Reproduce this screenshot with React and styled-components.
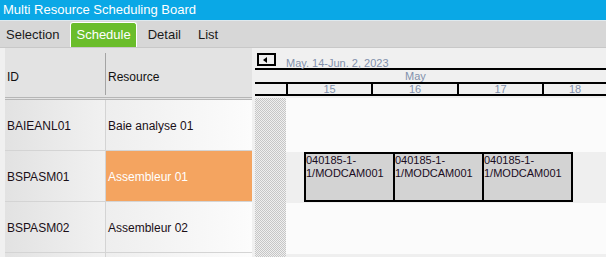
import styled, { createGlobalStyle } from 'styled-components';

const GlobalStyle = createGlobalStyle`
    html, body {
        margin: 0;
        padding: 0;
        background: #f0f0f0;
        overflow: hidden;
    }
    * {
        box-sizing: border-box;
    }
`;

const Page = styled.div`
    width: 606px;
    height: 257px;
    display: flex;
    flex-direction: column;
    font-family: "Liberation Sans", Arial, sans-serif;
    overflow: hidden;
`;

const TitleBar = styled.div`
    height: 21px;
    flex: none;
    background: #0aa8e6;
    border-bottom: 1px solid #dfe9ee;
    color: #fff;
    font-size: 13px;
    line-height: 20px;
    padding-left: 3px;
`;

const TabBar = styled.div`
    height: 27px;
    flex: none;
    background: #d7d7d7;
    border-bottom: 1px solid #c8c8c8;
    display: flex;
    align-items: flex-end;
    gap: 5px;
`;

const Tab = styled.div`
    height: 25px;
    padding: 0 5px;
    font-size: 13px;
    line-height: 24px;
    color: ${({ $active }) => ($active ? '#fff' : '#1a1a1a')};
    background: ${({ $active }) => ($active ? '#6abd2b' : 'transparent')};
    border: 1px solid ${({ $active }) => ($active ? '#fff' : 'transparent')};
    border-bottom: 0;
    border-radius: 3px 3px 0 0;
`;

const Main = styled.div`
    flex: 1;
    display: flex;
    overflow: hidden;
`;

const Grid = styled.div`
    width: 247px;
    flex: none;
    margin-left: 5px;
    display: flex;
    flex-direction: column;
`;

const GridHeader = styled.div`
    height: 52px;
    flex: none;
    background: #e3e3e3;
    border-bottom: 3px double #b6b6b6;
    display: flex;
    font-size: 12px;
    color: #111;
`;

const HeaderCell = styled.div`
    width: ${({ $w }) => $w};
    flex: ${({ $grow }) => ($grow ? 1 : 'none')};
    display: flex;
    align-items: center;
    padding: 6px 0 0 2px;
    border-right: ${({ $divider }) => ($divider ? '1px solid #a4a4a4' : '0')};
    margin: 5px 0 2px 0;
`;

const Row = styled.div`
    height: 51px;
    flex: none;
    display: flex;
    border-bottom: 1px solid #d4d4d4;
    font-size: 12px;
    color: #1b0f17;
`;

const IdCell = styled.div`
    width: 101px;
    padding: 2px 0 0 2px;
    display: flex;
    align-items: center;
    border-right: 1px solid #d4d4d4;
    background: linear-gradient(90deg, #e2e2e2 0%, #f1f1f1 100%);
`;

const ResourceCell = styled.div`
    flex: 1;
    padding: 2px 0 0 2px;
    display: flex;
    align-items: center;
    color: ${({ $selected }) => ($selected ? '#fff' : '#1b0f17')};
    background: ${({ $selected }) =>
        $selected ? '#f4a460' : 'linear-gradient(90deg, #eeeeee 0%, #fcfcfc 100%)'};
`;

const Gantt = styled.div`
    flex: 1;
    margin-left: 3px;
    display: flex;
    flex-direction: column;
`;

const GanttHeader = styled.div`
    height: 50px;
    flex: none;
    display: flex;
    flex-direction: column;
    font-size: 11px;
    color: #8290ac;
`;

const NavRow = styled.div`
    height: 22px;
    flex: none;
    display: flex;
    align-items: flex-start;
    border-bottom: 2px solid #000;
`;

const NavButton = styled.button`
    width: 19px;
    height: 13px;
    margin: 5px 0 0 2px;
    padding: 0;
    border: 2px solid #000;
    background: #f0f0f0;
    display: flex;
    align-items: center;
    justify-content: center;
    &::before {
        content: '';
        border-top: 3px solid transparent;
        border-bottom: 3px solid transparent;
        border-right: 4px solid #000;
        margin-right: 3px;
    }
`;

const RangeLabel = styled.span`
    margin: 9px 0 0 10px;
    line-height: 12px;
`;

const MonthRow = styled.div`
    height: 14px;
    flex: none;
    line-height: 12px;
    padding-left: 150px;
    border-bottom: 2px solid #000;
`;

const DayRow = styled.div`
    height: 12px;
    flex: none;
    display: flex;
    border-bottom: 2px solid #000;
`;

const DayCell = styled.div`
    width: ${({ $w }) => $w}px;
    flex: none;
    text-align: center;
    line-height: 10px;
    border-left: ${({ $first }) => ($first ? '0' : '2px solid #000')};
`;

const GanttBody = styled.div`
    flex: 1;
    display: flex;
`;

const Weekend = styled.div`
    width: 31px;
    flex: none;
    background-color: #efefef;
    background-image: repeating-conic-gradient(#c6c6c6 0 25%, #efefef 0 50%);
    background-size: 2px 2px;
`;

const Lanes = styled.div`
    flex: 1;
    display: flex;
    flex-direction: column;
`;

const Lane = styled.div`
    position: relative;
    height: ${({ $h }) => $h}px;
    flex: none;
    background: ${({ $alt }) => ($alt ? '#efefef' : '#fbfbfb')};
`;

const Task = styled.div`
    position: absolute;
    top: 0;
    height: 50px;
    width: 91px;
    background: #d3d3d3;
    border: 2px solid #000;
    padding: 0;
    font-size: 11px;
    line-height: 13px;
    color: #1a0c1e;
`;

const resources = [
    { id: 'BAIEANL01', name: 'Baie analyse 01' },
    { id: 'BSPASM01', name: 'Assembleur 01', selected: true },
    { id: 'BSPASM02', name: 'Assembleur 02' },
    { id: '', name: '' },
];

const days = [
    { label: '', w: 31 },
    { label: '15', w: 85 },
    { label: '16', w: 86 },
    { label: '17', w: 85 },
    { label: '18', w: 64 },
];

const tasks = [18, 107, 196];

function App() {
    return <Page>
        <GlobalStyle />
        <TitleBar>Multi Resource Scheduling Board</TitleBar>
        <TabBar>
            <Tab>Selection</Tab>
            <Tab $active>Schedule</Tab>
            <Tab>Detail</Tab>
            <Tab>List</Tab>
        </TabBar>
        <Main>
            <Grid>
                <GridHeader>
                    <HeaderCell $w="101px" $divider>ID</HeaderCell>
                    <HeaderCell $grow>Resource</HeaderCell>
                </GridHeader>
                {resources.map((r, i) => (
                    <Row key={i}>
                        <IdCell>{r.id}</IdCell>
                        <ResourceCell $selected={r.selected}>{r.name}</ResourceCell>
                    </Row>
                ))}
            </Grid>
            <Gantt>
                <GanttHeader>
                    <NavRow>
                        <NavButton aria-label="Previous" />
                        <RangeLabel>May. 14-Jun. 2, 2023</RangeLabel>
                    </NavRow>
                    <MonthRow>May</MonthRow>
                    <DayRow>
                        {days.map((d, i) => (
                            <DayCell key={i} $w={d.w} $first={i === 0}>{d.label}</DayCell>
                        ))}
                    </DayRow>
                </GanttHeader>
                <GanttBody>
                    <Weekend />
                    <Lanes>
                        <Lane $h={54} />
                        <Lane $h={51} $alt>
                            {tasks.map(left => (
                                <Task key={left} style={{ left }}>
                                    040185-1-<br />1/MODCAM001
                                </Task>
                            ))}
                        </Lane>
                        <Lane $h={51} />
                        <Lane $h={51} $alt />
                    </Lanes>
                </GanttBody>
            </Gantt>
        </Main>
    </Page>;
}

export default App;
